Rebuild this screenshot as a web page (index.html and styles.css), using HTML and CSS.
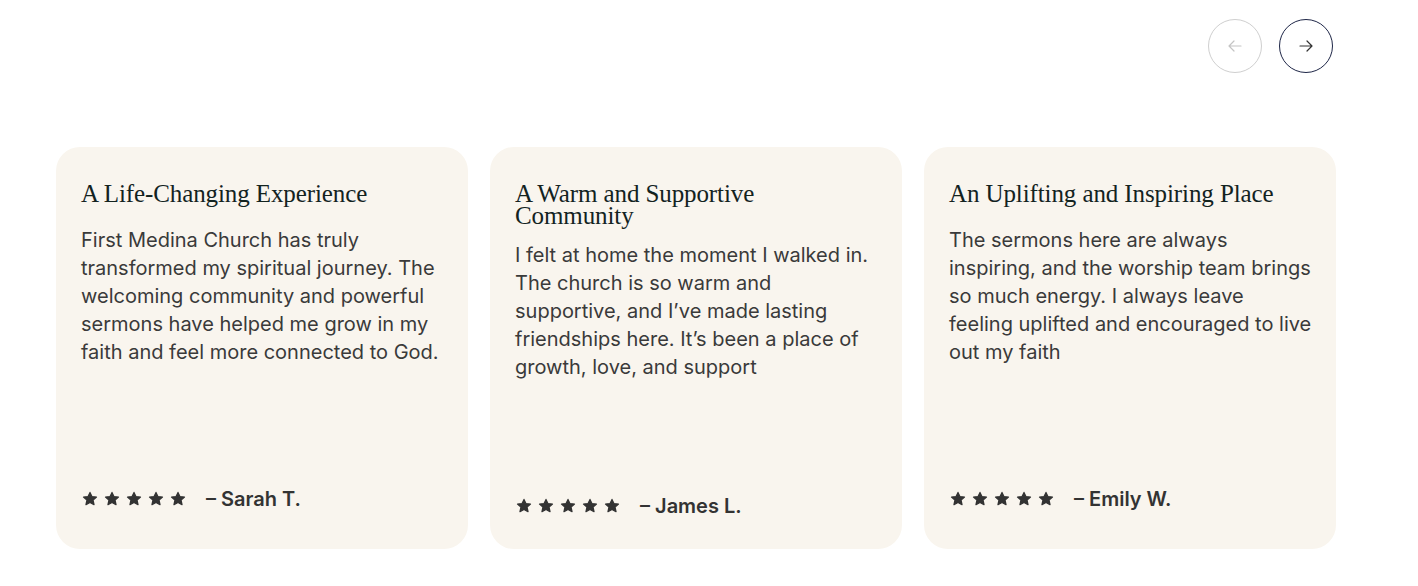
FILE: index.html
```html
<!DOCTYPE html>
<html lang="en">
<head>
<meta charset="utf-8">
<title>Testimonials</title>
<link rel="stylesheet" href="styles.css">
</head>
<body>
<section class="testimonials">
  <div class="nav">
    <button class="nav-btn nav-btn--disabled" aria-label="Previous">
      <svg width="14" height="14" viewBox="0 0 14 14" fill="none" stroke="currentColor" stroke-width="1.2" stroke-linecap="round" stroke-linejoin="round"><path d="M13 7H1M6 2L1 7l5 5"/></svg>
    </button>
    <button class="nav-btn" aria-label="Next">
      <svg width="14" height="14" viewBox="0 0 14 14" fill="none" stroke="currentColor" stroke-width="1.2" stroke-linecap="round" stroke-linejoin="round"><path d="M1 7h12M8 2l5 5-5 5"/></svg>
    </button>
  </div>
  <div class="cards">
    <article class="card">
      <h3 class="card-title">A Life-Changing Experience</h3>
      <p class="card-text">First Medina Church has truly transformed my spiritual journey. The welcoming community and powerful sermons have helped me grow in my faith and feel more connected to God.</p>
      <div class="card-footer">
        <div class="stars">
          <svg class="star" viewBox="0 0 24 24"><path d="M12 3.2l2.6 5.6 6.1.6-4.6 4.1 1.3 6.1L12 16.5l-5.4 3.1 1.3-6.1-4.6-4.1 6.1-.6z"/></svg>
          <svg class="star" viewBox="0 0 24 24"><path d="M12 3.2l2.6 5.6 6.1.6-4.6 4.1 1.3 6.1L12 16.5l-5.4 3.1 1.3-6.1-4.6-4.1 6.1-.6z"/></svg>
          <svg class="star" viewBox="0 0 24 24"><path d="M12 3.2l2.6 5.6 6.1.6-4.6 4.1 1.3 6.1L12 16.5l-5.4 3.1 1.3-6.1-4.6-4.1 6.1-.6z"/></svg>
          <svg class="star" viewBox="0 0 24 24"><path d="M12 3.2l2.6 5.6 6.1.6-4.6 4.1 1.3 6.1L12 16.5l-5.4 3.1 1.3-6.1-4.6-4.1 6.1-.6z"/></svg>
          <svg class="star" viewBox="0 0 24 24"><path d="M12 3.2l2.6 5.6 6.1.6-4.6 4.1 1.3 6.1L12 16.5l-5.4 3.1 1.3-6.1-4.6-4.1 6.1-.6z"/></svg>
        </div>
        <span class="author">– Sarah T.</span>
      </div>
    </article>
    <article class="card">
      <h3 class="card-title">A Warm and Supportive Community</h3>
      <p class="card-text">I felt at home the moment I walked in. The church is so warm and supportive, and I’ve made lasting friendships here. It’s been a place of growth, love, and support</p>
      <div class="card-footer">
        <div class="stars">
          <svg class="star" viewBox="0 0 24 24"><path d="M12 3.2l2.6 5.6 6.1.6-4.6 4.1 1.3 6.1L12 16.5l-5.4 3.1 1.3-6.1-4.6-4.1 6.1-.6z"/></svg>
          <svg class="star" viewBox="0 0 24 24"><path d="M12 3.2l2.6 5.6 6.1.6-4.6 4.1 1.3 6.1L12 16.5l-5.4 3.1 1.3-6.1-4.6-4.1 6.1-.6z"/></svg>
          <svg class="star" viewBox="0 0 24 24"><path d="M12 3.2l2.6 5.6 6.1.6-4.6 4.1 1.3 6.1L12 16.5l-5.4 3.1 1.3-6.1-4.6-4.1 6.1-.6z"/></svg>
          <svg class="star" viewBox="0 0 24 24"><path d="M12 3.2l2.6 5.6 6.1.6-4.6 4.1 1.3 6.1L12 16.5l-5.4 3.1 1.3-6.1-4.6-4.1 6.1-.6z"/></svg>
          <svg class="star" viewBox="0 0 24 24"><path d="M12 3.2l2.6 5.6 6.1.6-4.6 4.1 1.3 6.1L12 16.5l-5.4 3.1 1.3-6.1-4.6-4.1 6.1-.6z"/></svg>
        </div>
        <span class="author">– James L.</span>
      </div>
    </article>
    <article class="card">
      <h3 class="card-title">An Uplifting and Inspiring Place</h3>
      <p class="card-text">The sermons here are always inspiring, and the worship team brings so much energy. I always leave feeling uplifted and encouraged to live out my faith</p>
      <div class="card-footer">
        <div class="stars">
          <svg class="star" viewBox="0 0 24 24"><path d="M12 3.2l2.6 5.6 6.1.6-4.6 4.1 1.3 6.1L12 16.5l-5.4 3.1 1.3-6.1-4.6-4.1 6.1-.6z"/></svg>
          <svg class="star" viewBox="0 0 24 24"><path d="M12 3.2l2.6 5.6 6.1.6-4.6 4.1 1.3 6.1L12 16.5l-5.4 3.1 1.3-6.1-4.6-4.1 6.1-.6z"/></svg>
          <svg class="star" viewBox="0 0 24 24"><path d="M12 3.2l2.6 5.6 6.1.6-4.6 4.1 1.3 6.1L12 16.5l-5.4 3.1 1.3-6.1-4.6-4.1 6.1-.6z"/></svg>
          <svg class="star" viewBox="0 0 24 24"><path d="M12 3.2l2.6 5.6 6.1.6-4.6 4.1 1.3 6.1L12 16.5l-5.4 3.1 1.3-6.1-4.6-4.1 6.1-.6z"/></svg>
          <svg class="star" viewBox="0 0 24 24"><path d="M12 3.2l2.6 5.6 6.1.6-4.6 4.1 1.3 6.1L12 16.5l-5.4 3.1 1.3-6.1-4.6-4.1 6.1-.6z"/></svg>
        </div>
        <span class="author">– Emily W.</span>
      </div>
    </article>
  </div>
</section>
</body>
</html>
```

FILE: styles.css
```css
* { box-sizing: border-box; }

html, body {
  margin: 0;
  padding: 0;
  background: #ffffff;
}

body {
  font-family: Inter, "Noto Sans", sans-serif;
  color: #333333;
}

.testimonials {
  width: 1280px;
  margin-left: 56px;
  padding-top: 19px;
}

.nav {
  display: flex;
  justify-content: flex-end;
  gap: 17px;
  padding-right: 3px;
}

.nav-btn {
  width: 54px;
  height: 54px;
  border-radius: 50%;
  border: 1px solid #1e2647;
  background: #ffffff;
  color: #333333;
  display: flex;
  align-items: center;
  justify-content: center;
  padding: 0;
  cursor: pointer;
}

.nav-btn--disabled {
  border-color: #cfcfcf;
  color: #c4c4c4;
  cursor: default;
}

.cards {
  margin-top: 74px;
  display: grid;
  grid-template-columns: repeat(3, 412px);
  column-gap: 22px;
}

.card {
  background: #f9f5ee;
  border-radius: 24px;
  padding: 36px 23px 29px 25px;
  display: grid;
  grid-template-rows: auto auto auto;
}

.card-title {
  margin: 0;
  max-width: 340px;
  font-family: "Liberation Serif", "Times New Roman", serif;
  font-weight: 400;
  font-size: 25px;
  line-height: 22px;
  color: #13231f;
  letter-spacing: -0.1px;
}

.card-text {
  margin: 14px 0 0;
  font-size: 20px;
  line-height: 28px;
  color: #3a3a3a;
}

.card-footer {
  margin-top: 111px;
  display: flex;
  align-items: center;
  gap: 19px;
  height: 28px;
}

.stars {
  display: flex;
  gap: 4px;
}

.star {
  width: 18px;
  height: 18px;
  fill: #333333;
  stroke: #333333;
  stroke-width: 1.6;
  stroke-linejoin: round;
}

.author {
  font-size: 20px;
  font-weight: 600;
  color: #333333;
  line-height: 28px;
}
```
